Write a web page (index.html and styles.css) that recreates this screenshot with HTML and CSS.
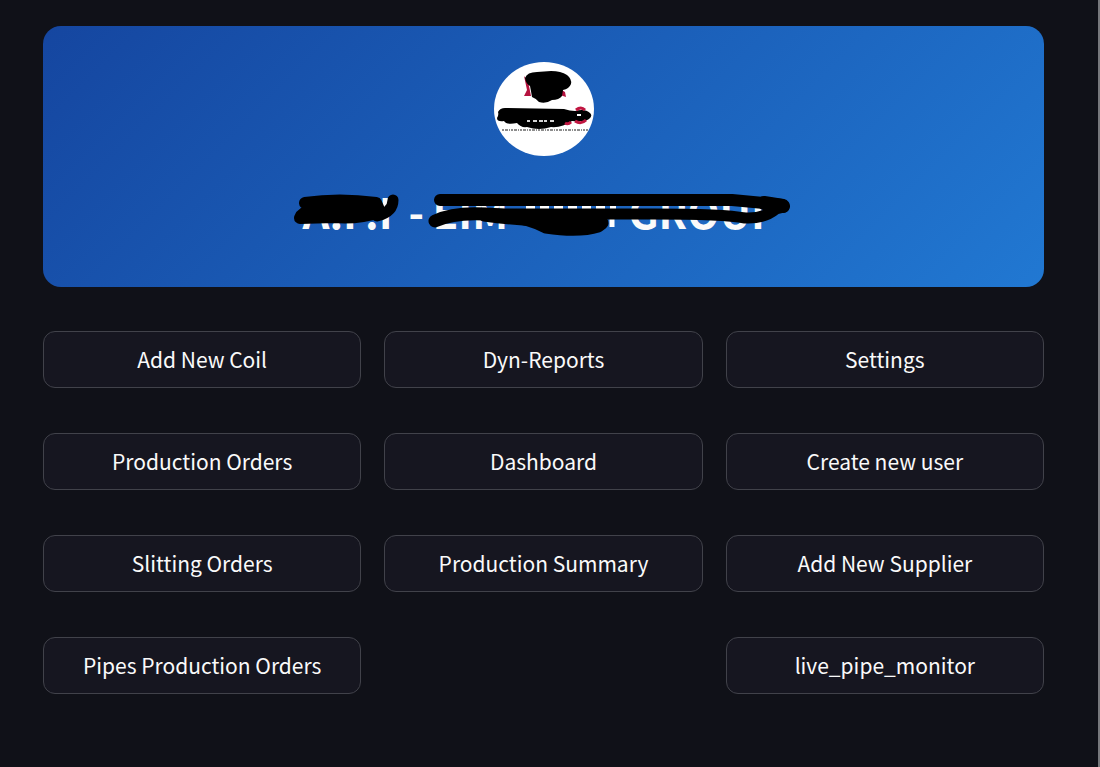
FILE: index.html
```html
<!DOCTYPE html>
<html lang="en">
<head>
  <meta charset="UTF-8">
  <meta name="viewport" content="width=device-width, initial-scale=1.0">
  <title>Home</title>
  <link rel="stylesheet" href="styles.css">
</head>
<body>

<main class="page">
  <header class="banner">
    <svg class="logo" viewBox="0 0 100 94" aria-hidden="true">
      <ellipse cx="50" cy="47" rx="50" ry="47" fill="#fff"/>
      <path d="M30 14 L34 19 L37 34 L30 34 L33 28 Z M66 27 L71 30 L72 35 L66 33 Z" fill="#b5123f"/>
      <path d="M8 68H94" stroke="#8d8d8d" stroke-width="2" stroke-dasharray="2 1 3 1 1 1"/>
      <path d="M31 16 Q33 10 43 10 L57 9 Q67 9 73 13 Q78 17 77 22 Q75 27 69 28 L68 34 Q65 38 58 38 Q52 42 45 40 Q43 37 38 35 Q37 29 36 24 Q32 22 31 16Z" fill="#000"/>
      <path d="M4 50 Q6 46 11 46 L70 47 Q76 49 81 49 Q91 46 96 51 Q99 54 95 57 Q91 60 78 59 Q68 66 57 65 Q45 69 33 65 Q27 66 23 61 Q12 63 10 59 Q3 60 3 56 Q5 53 4 50Z" fill="#000"/>
      <path d="M82 48 Q87 44 91 48 M81 59 Q87 63 92 58 M71 61 Q74 63 77 60" fill="none" stroke="#c01540" stroke-width="3"/>
      <path d="M83 53H87" stroke="#fff" stroke-width="2"/>
      <path d="M33 59H62" stroke="#d5d5d5" stroke-width="2" stroke-dasharray="3 3 4 2 4 1"/>
    </svg>
    <div class="title-wrap">
      <h1 class="title">
        <span>A.P.I</span>
        <span>-</span>
        <span>EIM</span>
        <span>GROUP</span>
      </h1>
      <svg class="marker" viewBox="0 0 500 44" aria-hidden="true">
        <path d="M232 15H322 M262 29L268 37 M275 28V37 M318 26V37" stroke="#fff" stroke-width="5" stroke-dasharray="9 5"/>
        <g fill="none" stroke="#000" stroke-linecap="round" stroke-linejoin="round">
          <path d="M11 11 Q45 6 82 11 L86 20 Q65 27 40 25 L6 26 Q8 20 19 18 Z" fill="#000" stroke-width="12"/>
          <path d="M83 24 Q99 20 99 8" stroke-width="11"/>
          <path d="M146 8H438L470 11 L488 13" stroke-width="12"/>
          <path d="M172 22 H360 Q430 22 451 26 Q470 27 482 17 L490 15" stroke-width="11"/>
          <path d="M141 29 Q160 20 192 22 Q230 23 252 35 Q285 40 304 34 L308 31" stroke-width="13"/>
          <path d="M190 24 Q250 32 308 30" stroke-width="11"/>
          <path d="M470 11 L489 14" stroke-width="14"/>
        </g>
      </svg>
    </div>
  </header>

  <nav class="menu">
    <div class="column">
      <button class="btn">Add New Coil</button>
      <button class="btn">Production Orders</button>
      <button class="btn">Slitting Orders</button>
      <button class="btn">Pipes Production Orders</button>
    </div>
    <div class="column">
      <button class="btn">Dyn-Reports</button>
      <button class="btn">Dashboard</button>
      <button class="btn">Production Summary</button>
    </div>
    <div class="column">
      <button class="btn">Settings</button>
      <button class="btn">Create new user</button>
      <button class="btn">Add New Supplier</button>
      <button class="btn">live_pipe_monitor</button>
    </div>
  </nav>
</main>

</body>
</html>
```
FILE: styles.css
```css
* {
  box-sizing: border-box;
}
body {
  margin: 0;
  min-height: 100vh;
  background-color: #101118;
  border-right: 2px solid #77787c;
  color: #fafafa;
  font-family: "Source Sans Pro", "Noto Sans CJK JP", sans-serif;
}
.page {
  padding: 26px 54px 26px 43px;
}
.banner {
  display: flex;
  flex-direction: column;
  align-items: center;
  gap: 36px;
  padding: 36px 36px 57px;
  margin-bottom: 44px;
  border-radius: 18px;
  background: linear-gradient(135deg, #1546a0, #2178d2);
}
.logo {
  width: 100px;
  height: 94px;
}
.title-wrap {
  position: relative;
  width: 500px;
}
.title {
  display: grid;
  grid-template-columns: 106px 24px 196px 1fr;
  margin: 0;
  padding-left: 9px;
  font-size: 42px;
  font-weight: 700;
  line-height: 38px;
}
.marker {
  position: absolute;
  top: 0;
  left: 0;
  width: 100%;
  height: 44px;
}
.menu {
  display: grid;
  grid-template-columns: repeat(3, 1fr);
  gap: 23px;
}
.column {
  display: flex;
  flex-direction: column;
  gap: 45px;
}
.btn {
  width: 100%;
  padding: 12px;
  border: 1px solid #41424a;
  border-radius: 12px;
  background-color: #161620;
  color: #fafafa;
  font-family: inherit;
  font-size: 21px;
  line-height: 31px;
  cursor: pointer;
}
.btn:hover {
  border-color: #2178d2;
}
```
